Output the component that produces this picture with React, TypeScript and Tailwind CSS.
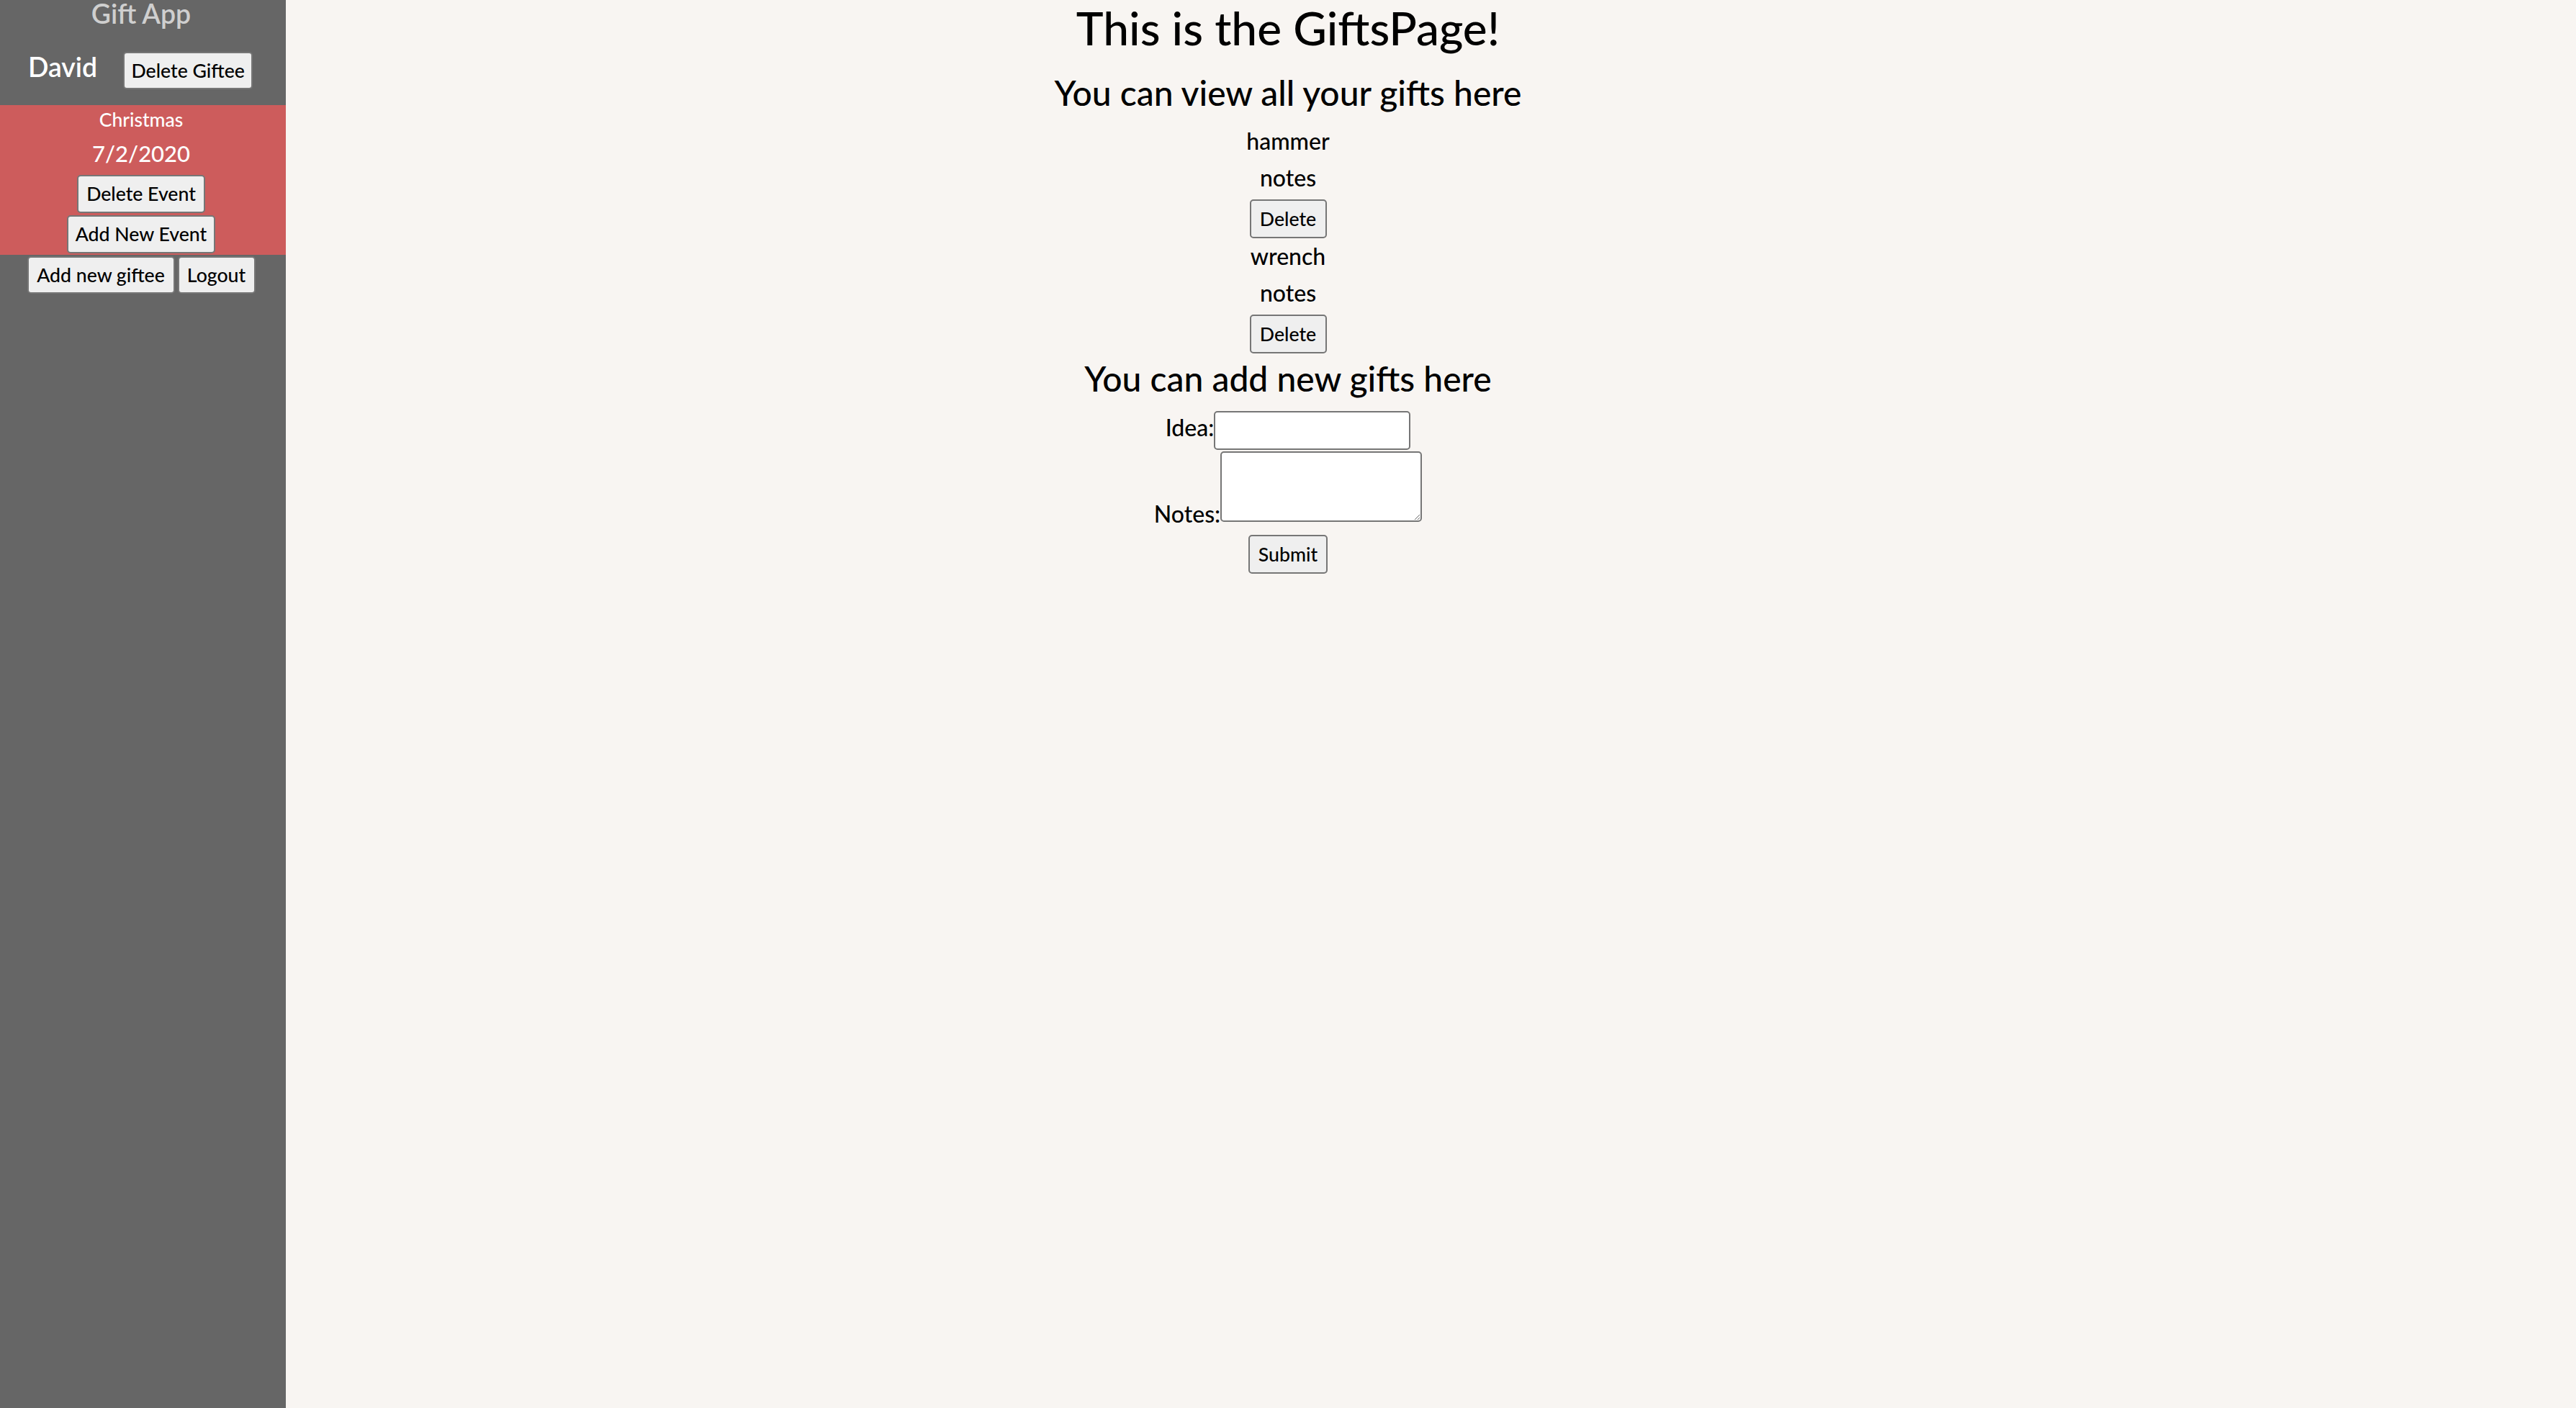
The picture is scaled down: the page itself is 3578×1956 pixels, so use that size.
const gifts = [
  { id: 1, idea: "hammer", notes: "notes" },
  { id: 2, idea: "wrench", notes: "notes" },
];

const btn =
  "rounded-[5px] border-2 border-[#767676] bg-[#efefef] text-[26.67px] leading-none text-black";

const Sidebar = () => {
  return (
    <aside className="w-[397px] shrink-0 bg-[#666666] pr-[5px] text-center">
      <h3 className="text-[37.4px] leading-[37px] font-semibold text-[#cfcfcf]">Gift App</h3>

      {/* giftee */}
      <div className="mt-[35px] flex h-[52px] items-start gap-[36px] pl-[39px]">
        <span className="mt-[2px] text-[37.4px] leading-[37px] font-semibold text-white">David</span>
        <button className={`${btn} h-[52px] w-[180px]`}>Delete Giftee</button>
      </div>

      {/* events */}
      <div className="mt-[22px] -mr-[5px] flex flex-col items-center bg-[#cd5c5c] pb-[2px] pr-[5px] pt-[4px]">
        <h5 className="text-[26.56px] leading-[32px] text-white">Christmas</h5>
        <p className="mt-[12px] text-[31px] leading-[38px] text-white">7/2/2020</p>
        <button className={`${btn} mt-[11px] h-[53px] w-[178px]`}>Delete Event</button>
        <button className={`${btn} mt-[3px] h-[53px] w-[206px]`}>Add New Event</button>
      </div>

      <div className="mt-[2px] flex justify-center gap-[4px]">
        <button className={`${btn} h-[52px] w-[205px]`}>Add new giftee</button>
        <button className={`${btn} h-[52px] w-[108px]`}>Logout</button>
      </div>
    </aside>
  );
};

const GiftsPage = () => {
  return (
    <main className="flex-1 pr-[397px] text-center text-black">
      <h1 className="text-[64px] leading-[77px]">This is the GiftsPage!</h1>
      <h2 className="mt-[23px] text-[48px] leading-[58px]">You can view all your gifts here</h2>

      <div className="mt-[12px]">
        {gifts.map((gift) => (
          <div key={gift.id}>
            <p className="text-[32px] leading-[51px]">{gift.idea}</p>
            <p className="text-[32px] leading-[51px]">{gift.notes}</p>
            <div className="h-[58px] pt-[5px]">
              <button className={`${btn} h-[54px] w-[107px]`}>Delete</button>
            </div>
          </div>
        ))}
      </div>

      <h2 className="mt-[7px] text-[48px] leading-[58px]">You can add new gifts here</h2>

      <form className="mt-[13px] flex flex-col items-center" onSubmit={(e) => e.preventDefault()}>
        <div className="flex items-start justify-center">
          <label className="text-[32px] leading-[51px]">Idea:</label>
          <input
            type="text"
            className="mt-[3px] h-[54px] w-[273px] rounded-[5px] border-2 border-[#767676] bg-white px-2 text-[26.67px]"
          />
        </div>
        <div className="mt-[2px] flex items-start justify-center">
          <label className="mt-[61px] text-[32px] leading-[51px]">Notes:</label>
          <textarea className="h-[98px] w-[280px] rounded-[5px] border-2 border-[#767676] bg-white text-[26.67px]" />
        </div>
        <button type="submit" className={`${btn} mt-[4px] h-[54px] w-[110px]`}>
          Submit
        </button>
      </form>
    </main>
  );
}

export default function App() {
  return (
    <div className="flex min-h-screen bg-[#f8f5f2] font-[Lato,sans-serif] font-medium">
      <Sidebar />
      <GiftsPage />
    </div>
  );
}
